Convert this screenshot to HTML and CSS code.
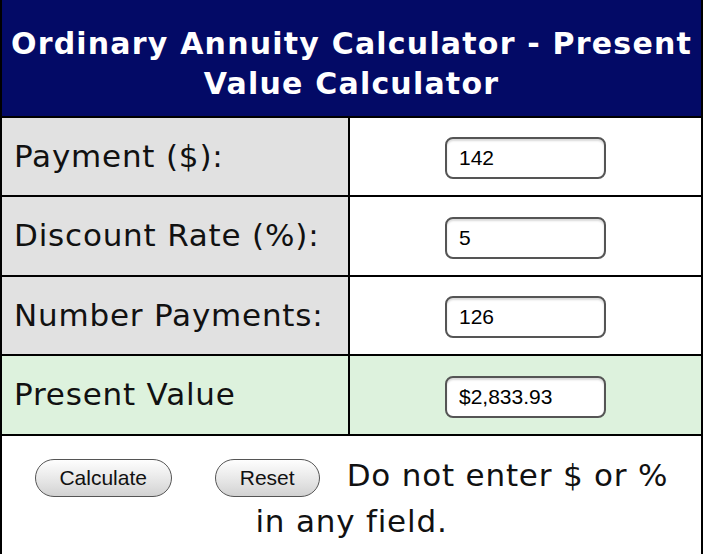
FILE: index.html
```html
<!DOCTYPE html>
<html>
<head>
<meta charset="utf-8">
<link rel="stylesheet" href="styles.css">
</head>
<body>
<div class="calc">
  <div class="title">Ordinary Annuity Calculator - Present Value Calculator</div>
  <div class="row r77">
    <div class="label">Payment ($):</div>
    <div class="field"><input class="box" type="text" value="142"></div>
  </div>
  <div class="row r78">
    <div class="label">Discount Rate (%):</div>
    <div class="field"><input class="box" type="text" value="5"></div>
  </div>
  <div class="row r77">
    <div class="label">Number Payments:</div>
    <div class="field"><input class="box" type="text" value="126"></div>
  </div>
  <div class="row r78 result">
    <div class="label">Present Value</div>
    <div class="field"><input class="box" type="text" value="$2,833.93"></div>
  </div>
  <div class="foot">
    <button class="btn calc-btn">Calculate</button><span class="gap"></span><button class="btn reset-btn">Reset</button><span class="gap2"></span><span class="note">Do not enter $ or %</span><br><span class="note">in any field.</span>
  </div>
</div>
</body>
</html>
```
FILE: styles.css
```css
html, body {
  margin: 0;
  padding: 0;
  background: #fff;
}
.calc {
  width: 699px;
  border: 2px solid #000;
  border-top: none;
  font-family: "DejaVu Sans", Verdana, sans-serif;
  color: #111;
}
.title {
  height: 118px;
  box-sizing: border-box;
  background: #030a66;
  color: #fff;
  font-weight: bold;
  font-size: 30px;
  letter-spacing: 1.2px;
  line-height: 40px;
  text-align: center;
  padding-top: 24px;
  border-bottom: 2px solid #000;
}
.row {
  display: grid;
  grid-template-columns: 348px 1fr;
  border-bottom: 2px solid #000;
}
.r77 { height: 77px; }
.r78 { height: 78px; }
.label {
  background: #e1e1e1;
  border-right: 2px solid #000;
  font-size: 31px;
  letter-spacing: 0.8px;
  display: flex;
  align-items: center;
  padding-left: 12px;
  padding-bottom: 2px;
}
.field {
  display: flex;
  align-items: center;
  justify-content: center;
  background: #fff;
  padding-top: 3px;
}
.result .label, .result .field {
  background: #ddf2dd;
}
.box {
  width: 161px;
  height: 42px;
  box-sizing: border-box;
  border: 2px solid #555;
  border-radius: 8px;
  background: #fff;
  box-shadow: inset 0 2px 2px rgba(0,0,0,0.15);
  font-family: "Liberation Sans", Arial, sans-serif;
  font-size: 21px;
  color: #000;
  padding: 0 12px;
  outline: none;
  margin: 0;
}
.foot {
  text-align: center;
  font-size: 31px;
  letter-spacing: 0.8px;
  line-height: 46px;
  padding: 16px 20px 20px;
}
.note {
  white-space: nowrap;
}
.btn {
  height: 38px;
  border: 1px solid #555;
  border-radius: 19px;
  background: linear-gradient(#fefefe, #e9e9e9 50%, #d2d2d2);
  font-family: "Liberation Sans", Arial, sans-serif;
  font-size: 21px;
  letter-spacing: 0;
  color: #111;
  padding: 0;
  vertical-align: middle;
  margin: 0;
}
.calc-btn { width: 137px; }
.reset-btn { width: 105px; }
.gap { display: inline-block; width: 43px; }
.gap2 { display: inline-block; width: 27px; }
```
